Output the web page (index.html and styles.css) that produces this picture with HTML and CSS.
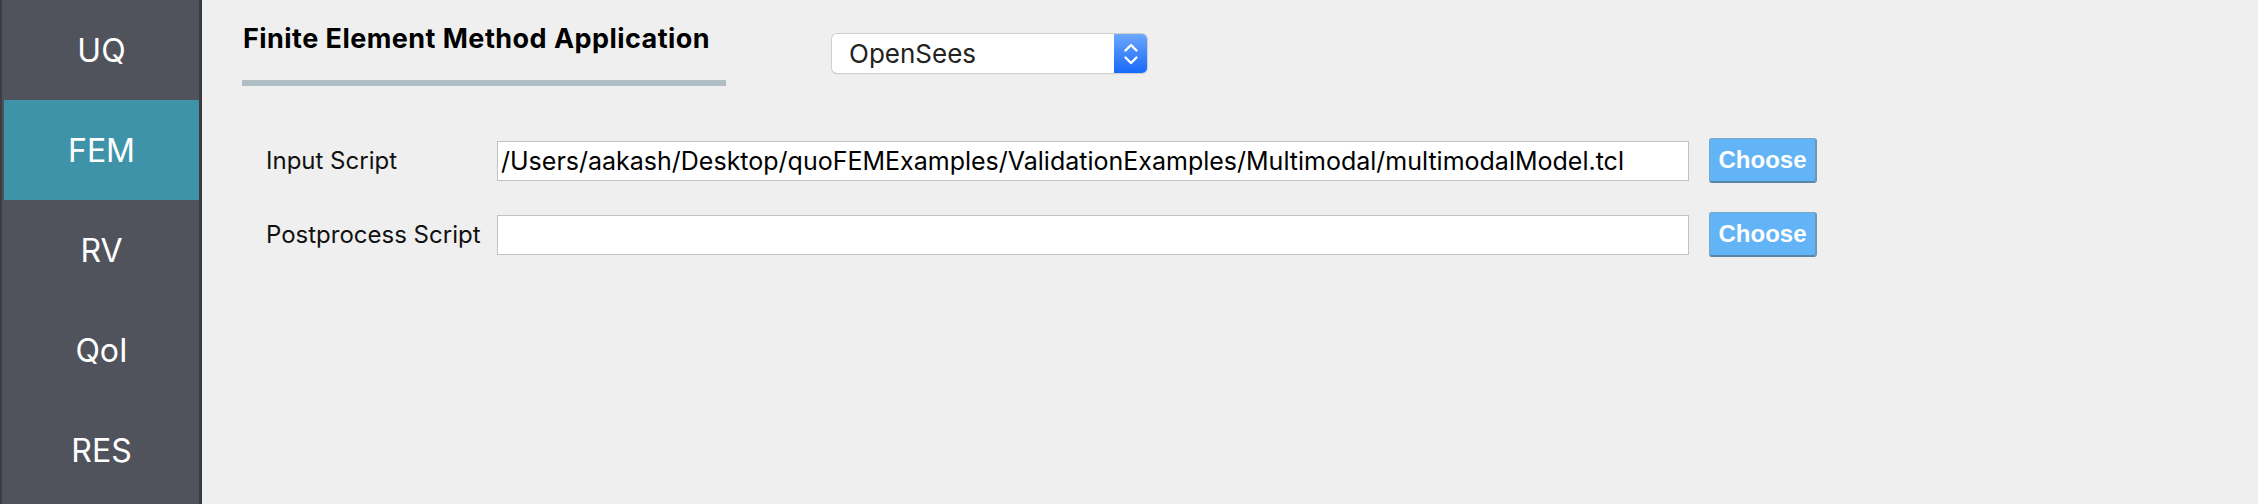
FILE: index.html
```html
<!DOCTYPE html>
<html>
<head>
<meta charset="utf-8">
<link rel="stylesheet" href="styles.css">
</head>
<body>
<div class="app">
  <nav class="sidebar">
    <div class="nav-item">UQ</div>
    <div class="nav-item active">FEM</div>
    <div class="nav-item">RV</div>
    <div class="nav-item">QoI</div>
    <div class="nav-item">RES</div>
  </nav>
  <main class="main">
    <div class="header">
      <div class="title-block">
        <div class="title">Finite Element Method Application</div>
        <div class="title-bar"></div>
      </div>
      <div class="select">
        <span class="select-text">OpenSees</span>
        <span class="select-btn">
          <svg width="18" height="28" viewBox="0 0 18 28"><path d="M3.5 10.5 L9 5 L14.5 10.5" fill="none" stroke="#fff" stroke-width="2.4" stroke-linecap="round" stroke-linejoin="round"/><path d="M3.5 17.5 L9 23 L14.5 17.5" fill="none" stroke="#fff" stroke-width="2.4" stroke-linecap="round" stroke-linejoin="round"/></svg>
        </span>
      </div>
    </div>
    <div class="rows">
      <div class="row">
        <div class="label">Input Script</div>
        <div class="input">/Users/aakash/Desktop/quoFEMExamples/ValidationExamples/Multimodal/multimodalModel.tcl</div>
        <div class="btn">Choose</div>
      </div>
      <div class="row">
        <div class="label">Postprocess Script</div>
        <div class="input"></div>
        <div class="btn">Choose</div>
      </div>
    </div>
  </main>
</div>
</body>
</html>
```
FILE: styles.css
```css
html, body {
  margin: 0;
  padding: 0;
  background: #efefef;
}
.app {
  display: flex;
  width: 2258px;
  height: 504px;
  font-family: Inter, "Noto Sans", sans-serif;
}
.sidebar {
  width: 197px;
  height: 504px;
  background: #50535b;
  border-left: 2px solid #3b3d42;
  border-right: 3px solid #3a3b3f;
  display: flex;
  flex-direction: column;
  flex-shrink: 0;
}
.nav-item {
  height: 100px;
  display: flex;
  align-items: center;
  justify-content: center;
  color: #ffffff;
  font-size: 32px;
  margin-left: 2px;
}
.nav-item.active {
  background: #3e93a9;
}
.main {
  flex: 1;
  padding-left: 40px;
}
.header {
  display: flex;
  align-items: flex-start;
}
.title-block {
  width: 484px;
  padding-top: 22px;
}
.title {
  font-size: 27px;
  font-weight: 700;
  letter-spacing: 0.45px;
  line-height: 34px;
  color: #000;
  padding-left: 1px;
}
.title-bar {
  height: 6px;
  margin-top: 24px;
  background: #b0bec6;
}
.select {
  margin-left: 106px;
  margin-top: 34px;
  width: 315px;
  height: 39px;
  box-sizing: border-box;
  background: #fff;
  border-radius: 5px;
  box-shadow: 0 0 0 1px #cfcfcf, 0 1px 1px #b8b8b8;
  display: flex;
  align-items: center;
  justify-content: space-between;
  overflow: hidden;
}
.select-text {
  font-size: 26px;
  color: #222;
  padding-left: 17px;
}
.select-btn {
  width: 33px;
  height: 39px;
  background: linear-gradient(#6ca7fb, #1769fa);
  display: flex;
  align-items: center;
  justify-content: center;
}
.rows {
  margin-top: 52px;
  padding-left: 24px;
  display: flex;
  flex-direction: column;
  gap: 29px;
}
.row {
  display: flex;
  align-items: center;
  height: 45px;
}
.label {
  width: 231px;
  font-size: 24px;
  color: #111;
}
.input {
  width: 1192px;
  height: 40px;
  box-sizing: border-box;
  background: #fff;
  border: 1px solid #c2c2c2;
  padding-left: 3px;
  font-size: 25px;
  line-height: 38px;
  color: #000;
  white-space: nowrap;
  overflow: hidden;
}
.btn {
  margin-left: 20px;
  width: 108px;
  height: 45px;
  box-sizing: border-box;
  background: #63b4f6;
  border: 1px solid #79a9c9;
  border-bottom: 2px solid #5a87a6;
  border-right: 2px solid #6b98b6;
  border-radius: 3px;
  color: #fff;
  font-family: "Liberation Sans", Arial, sans-serif;
  font-weight: 700;
  font-size: 24px;
  display: flex;
  align-items: center;
  justify-content: center;
}
```
